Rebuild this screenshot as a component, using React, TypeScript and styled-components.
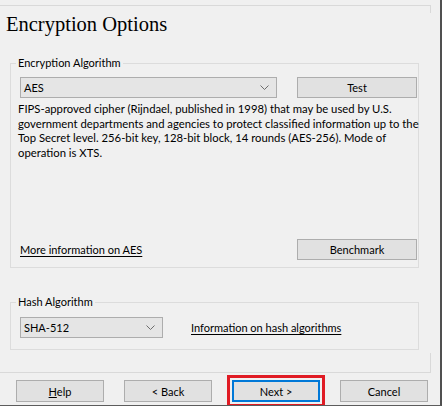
import React from "react";
import styled, { createGlobalStyle } from "styled-components";

const GlobalStyle = createGlobalStyle`
  html, body {
    margin: 0;
    padding: 0;
    background: #f0f0f0;
  }
  body {
    font-family: "Lato", "Liberation Sans", sans-serif;
    font-size: 11px;
    color: #000;
  }
  * {
    box-sizing: border-box;
  }
`;

const Window = styled.div`
  position: relative;
  width: 442px;
  height: 406px;
  overflow: hidden;
  background: #f0f0f0;
  border-right: 2px solid #505050;
  border-bottom: 1px solid #5c5c5c;
`;

// wizard page frame, only its top/bottom edges are visible
const Page = styled.div`
  position: relative;
  margin-top: 5px;
  width: 431px;
  height: 368px;
  border-top: 1px solid #d9d9d9;
  border-bottom: 1px solid #d9d9d9;
  &::before,
  &::after {
    content: "";
    position: absolute;
    right: 0;
    width: 1px;
    background: #d9d9d9;
  }
  &::before {
    top: -1px;
    height: 8px;
  }
  &::after {
    bottom: -1px;
    height: 20px;
  }
`;

const Title = styled.h1`
  margin: 6px 0 0 6px;
  font-family: "Liberation Serif", serif;
  font-weight: normal;
  font-size: 20.5px;
  line-height: 24px;
`;

const Group = styled.div<{ $top: number; $height: number; $padTop: number; $padBottom: number }>`
  position: relative;
  display: flex;
  flex-direction: column;
  margin: ${(p) => p.$top}px 0 0 10px;
  width: 409px;
  height: ${(p) => p.$height}px;
  padding: ${(p) => p.$padTop}px 1px ${(p) => p.$padBottom}px 9px;
  border: 1px solid #dcdcdc;
`;

const Legend = styled.span`
  position: absolute;
  top: -8px;
  left: 5px;
  padding: 0 2px;
  background: #f0f0f0;
  line-height: 14px;
`;

const Row = styled.div<{ $gap: number }>`
  display: flex;
  align-items: center;
  gap: ${(p) => p.$gap}px;
`;

const BottomRow = styled.div`
  display: flex;
  align-items: center;
  justify-content: space-between;
  margin-top: auto;
`;

const Combo = styled.div<{ $width: number }>`
  display: flex;
  align-items: center;
  justify-content: space-between;
  width: ${(p) => p.$width}px;
  height: 21px;
  padding: 0 7px 0 3px;
  background: #e5e5e5;
  border: 1px solid #adadad;
`;

const Button = styled.div<{ $width?: number; $height?: number }>`
  display: flex;
  align-items: center;
  justify-content: center;
  width: ${(p) => p.$width ?? 88}px;
  height: ${(p) => p.$height ?? 22}px;
  background: #e1e1e1;
  border: 1px solid #adadad;
`;

const DefaultButton = styled(Button)`
  border: 2px solid #0078d7;
`;

// red annotation frame drawn around the Next button
const Highlight = styled.div`
  margin: -5px;
  padding: 2px;
  border: 3px solid #e01b24;
`;

const Description = styled.p`
  margin: 4px 0 0 -2px;
  font-size: 11.3px;
  line-height: 14.5px;
  white-space: nowrap;
`;

const Link = styled.a`
  color: #000;
  text-decoration: underline;
  text-underline-offset: 2px;
  cursor: pointer;
`;

const HashLink = styled(Link)`
  margin-left: 28px;
`;

const Footer = styled.div`
  display: flex;
  align-items: flex-start;
  gap: 20px;
  margin-top: 7px;
  padding-left: 16px;
`;

const Chevron = () => (
  <svg width="9" height="5" viewBox="0 0 9 5">
    <polyline points="0.5,0.5 4.5,4.5 8.5,0.5" fill="none" stroke="#6d6d6d" strokeWidth="1" />
  </svg>
);

export default function App() {
  return (
    <>
      <GlobalStyle />
      <Window>
        <Page>
          <Title>Encryption Options</Title>
          <Group $top={27} $height={205} $padTop={13} $padBottom={7}>
            <Legend>Encryption Algorithm</Legend>
            <Row $gap={20}>
              <Combo $width={257}>
                <span>AES</span>
                <Chevron />
              </Combo>
              <Button $width={120} $height={21}>Test</Button>
            </Row>
            <Description>
              FIPS-approved cipher (Rijndael, published in 1998) that may be used by U.S.
              <br />
              government departments and agencies to protect classified information up to the
              <br />
              Top Secret level. 256-bit key, 128-bit block, 14 rounds (AES-256). Mode of
              <br />
              operation is XTS.
            </Description>
            <BottomRow>
              <Link>More information on AES</Link>
              <Button $width={120} $height={21}>Benchmark</Button>
            </BottomRow>
          </Group>
          <Group $top={34} $height={48} $padTop={14} $padBottom={0}>
            <Legend>Hash Algorithm</Legend>
            <Row $gap={0}>
              <Combo $width={143}>
                <span>SHA-512</span>
                <Chevron />
              </Combo>
              <HashLink>Information on hash algorithms</HashLink>
            </Row>
          </Group>
        </Page>
        <Footer>
          <Button>
            <span>
              <u>H</u>elp
            </span>
          </Button>
          <Button>&lt; Back</Button>
          <Highlight>
            <DefaultButton>Next &gt;</DefaultButton>
          </Highlight>
          <Button>Cancel</Button>
        </Footer>
      </Window>
    </>
  );
}
